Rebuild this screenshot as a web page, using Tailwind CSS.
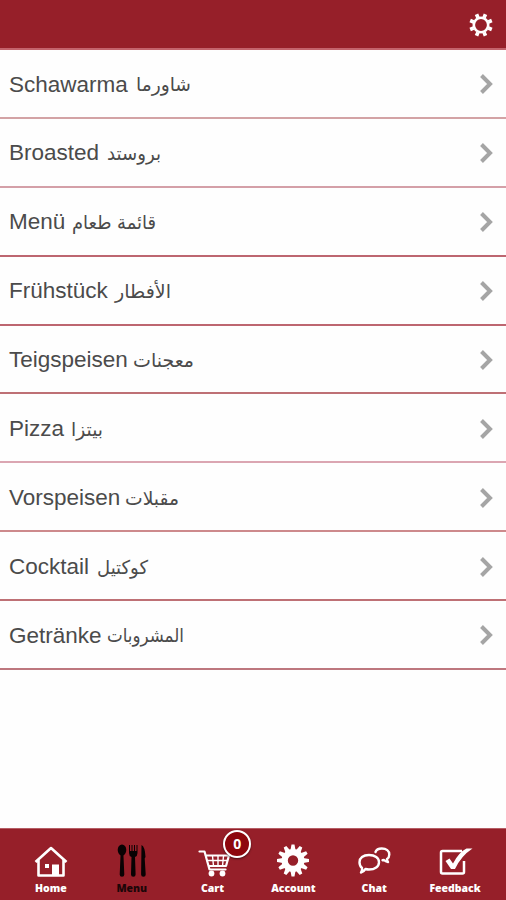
<!DOCTYPE html>
<html lang="de">
<head>
<meta charset="utf-8">
<meta name="viewport" content="width=device-width, initial-scale=1">
<title>Menu</title>
<script src="https://cdn.jsdelivr.net/npm/@tailwindcss/browser@4"></script>
</head>
<body class="flex h-[900px] w-[506px] flex-col overflow-hidden bg-[#fefefe] font-['Liberation_Sans','DejaVu_Sans',sans-serif]">
<header class="flex h-[50px] shrink-0 items-center justify-end border-b-2 border-[#c4636c] bg-[#961f29] pr-[13px]">
  <svg class="mt-[2px] size-6" viewBox="-12 -12 24 24" fill="none" stroke="#fff">
    <circle r="7.200" stroke-width="2.600"/>
    <g stroke-width="3.700">
      <path id="t" d="M0-8V-11.7M0 8V11.7M-8 0H-11.7M8 0H11.7" transform="rotate(22.5)"/>
      <use href="#t" transform="rotate(45)"/>
    </g>
  </svg>
</header>
<main id="list" class="flex-1 text-[22.5px] text-[#4b4b4b]"></main>
<nav class="flex h-[72px] shrink-0 items-stretch border-t border-[#b55d65] bg-[#961f29] px-[10.5px] font-['Open_Sans',sans-serif] text-[10.5px] leading-[14px] font-extrabold text-white">
  <div class="flex flex-1 flex-col items-center pt-[14px]">
    <svg class="h-[36px] w-[36px]" viewBox="0 0 36 36" fill="none" stroke="#fff" stroke-width="2.6" stroke-linejoin="round"><path d="M2.500 19 18 5l15.500 14M5.500 17V32.500h25V17"/><path fill="#fff" stroke="none" d="M19 21.500h7v11h-7zM12 21h4v4h-4z"/></svg>
    <span class="mt-[2px]">Home</span>
  </div>
  <div class="flex flex-1 flex-col items-center pt-[14px] text-[#1c0608]">
    <svg class="h-[36px] w-[36px]" viewBox="0 0 36 36" fill="#080203"><ellipse cx="8" cy="7" rx="4.300" ry="5.500"/><path d="M6.600 11h2.800l.9 20.500a2.300 2.300 0 0 1-4.600 0zM15 2h1v6h1.500V2h1v6h1.500V2h1v6h1.500V2h1v8q0 3-2.500 4l.6 17.500a2.300 2.300 0 0 1-4.600 0L17.500 14q-2.500-1-2.500-4zM27.500 2q3.500 1.500 4 12l-.8 1.500 1 16a2.300 2.300 0 0 1-4.600 0z"/></svg>
    <span class="mt-[2px]">Menu</span>
  </div>
  <div class="relative flex flex-1 flex-col items-center pt-[14px]">
    <svg class="h-[36px] w-[36px]" viewBox="0 0 36 36" fill="none" stroke="#fff" stroke-width="2.200" stroke-linejoin="round" stroke-linecap="round"><path d="M4.500 8.500h5l5 18h16M10.500 12.500h23.500L31 23H14"/><path stroke-width="1.400" d="M12 17.500h20M17.500 13l1 10M23 13v10M28.500 13l-1 10"/><g fill="#fff" stroke="none"><circle cx="16.500" cy="30.500" r="2.900"/><circle cx="27.500" cy="30.500" r="2.900"/></g></svg>
    <span class="mt-[2px]">Cart</span>
    <span class="absolute top-[1px] left-[51px] flex size-[28px] items-center justify-center rounded-full border-[2.500px] border-white bg-[#8d070d] text-[14px] font-bold shadow-[0_1px_2px_#0008]">0</span>
  </div>
  <div class="flex flex-1 flex-col items-center pt-[14px]">
    <svg class="h-[36px] w-[36px]" viewBox="-18 -17.500 36 36"><circle r="8.300" fill="none" stroke="#fff" stroke-width="6.200"/><g fill="#fff"><path id="a" d="M-2.600-10-1.500-16H1.500L2.600-10zM-2.600 10-1.500 16H1.500L2.600 10z"/><use href="#a" transform="rotate(30)"/><use href="#a" transform="rotate(60)"/><use href="#a" transform="rotate(90)"/><use href="#a" transform="rotate(120)"/><use href="#a" transform="rotate(150)"/></g></svg>
    <span class="mt-[2px]">Account</span>
  </div>
  <div class="flex flex-1 flex-col items-center pt-[14px]">
    <svg class="h-[36px] w-[36px]" viewBox="0 0 36 36" fill="none" stroke="#fff" stroke-width="2.400" stroke-linejoin="round" stroke-linecap="round"><path d="M13 12c6 0 10 3 10 7.200s-4 7.300-10 7.300q-2 0-3.500-.5-2 3-4.500 3.500 1.500-2 1-4.500-2.500-2-2.500-5.800c0-4.200 3.500-7.200 9.500-7.200z"/><path d="M19.500 9c1-3 3.500-3.500 6.300-3.500 4.500 0 7.500 2.500 7.500 6 0 2-.8 3.500-2.300 4.500q0 1.800 1 3-2.500-.3-4-2l-1.500.2"/></svg>
    <span class="mt-[2px]">Chat</span>
  </div>
  <div class="flex flex-1 flex-col items-center pt-[14px]">
    <svg class="h-[36px] w-[36px]" viewBox="0 0 36 36" fill="none" stroke="#fff" stroke-width="2.500"><path d="M25 8H5.500Q4 8 4 9.500V29q0 1.500 1.500 1.500h20Q27 30.500 27 29V18"/><path fill="#fff" stroke="none" d="m8.500 18 4-2.500 3.500 5Q22 9 29.500 5.500h6Q24 13 18 26h-4z"/></svg>
    <span class="mt-[2px]">Feedback</span>
  </div>
</nav>
<script>
// name, Arabic name, left edge and width of the Arabic name, line colour
const rows = [
  ["Schawarma", "شاورما", 136, 55, "#d3a3a5"],
  ["Broasted", "بروستد", 107, 54, "#d4a0a8"],
  ["Menü", "قائمة طعام", 72, 84, "#bd6670"],
  ["Frühstück", "الأفطار", 115, 56, "#bd6670"],
  ["Teigspeisen", "معجنات", 133, 61, "#be7075"],
  ["Pizza", "بيتزا", 71, 32, "#dba6b2"],
  ["Vorspeisen", "مقبلات", 125, 54, "#cd8a8c"],
  ["Cocktail", "كوكتيل", 97, 51, "#be7075"],
  ["Getränke", "المشروبات", 107, 77, "#bd777e"]
];
const list = document.getElementById("list");
for (const [name, arabic, left, width, line] of rows) {
  list.insertAdjacentHTML("beforeend", `
  <div class="flex h-[68.875px] items-center border-b-2 pr-[12px] pl-[9px]" style="border-color:${line}">
    <span class="mt-[2px] whitespace-nowrap" style="width:${left - 9}px">${name}</span>
    <svg class="h-[40px] overflow-visible font-['DejaVu_Sans',sans-serif] text-[19px]" width="${width}" height="40" fill="currentColor"><text lang="ar" x="0" y="28" textLength="${width}" lengthAdjust="spacingAndGlyphs">${arabic}</text></svg>
    <svg class="mt-[2px] ml-auto h-[20px] w-[14px]" viewBox="0 0 14 20" fill="none" stroke="#a5a5a5" stroke-width="4"><path d="m1.500 1.500 8.500 8.500-8.500 8.500"/></svg>
  </div>`);
}
</script>
</body>
</html>
